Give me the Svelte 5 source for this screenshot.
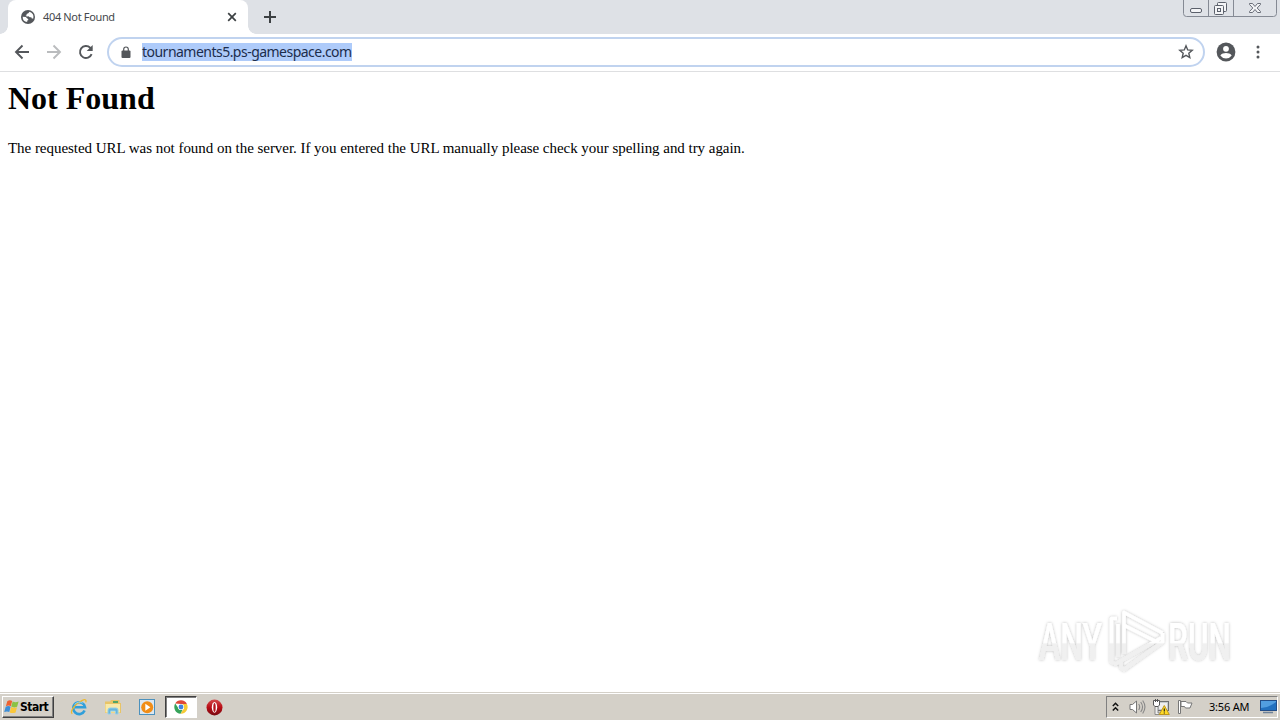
<script>
  const tabTitle = '404 Not Found';
  const address = 'tournaments5.ps-gamespace.com';
</script>

<div class="screen">
  <header class="tabs">
    <div class="tab">
      <svg class="globe" width="14" height="14" viewBox="0 0 14 14">
        <circle cx="7" cy="7" r="7" fill="#54575b" />
        <path d="M8.500 1.800 7.300 3.300 5.600 4v1.300l-1.200.6 1.800.5 1.300-.2 1.300 1.100h1.500l.5 1.200h1.500A5.300 5.300 0 0 0 8.500 1.800zM1.700 6.700l3.100.4 1.500 1.500.9.3v1.300l-1 .4v1.500A5.300 5.300 0 0 1 1.700 6.700z" fill="#fff" />
      </svg>
      <span class="tab-title">{tabTitle}</span>
      <svg class="close" width="10" height="10" viewBox="0 0 10 10"><path d="m1.200 1.200 7.600 7.600m0-7.600L1.200 8.800" stroke="#3c4043" stroke-width="1.700" /></svg>
    </div>
    <svg class="plus" width="12" height="12" viewBox="0 0 12 12"><path d="M6 0v12M0 6h12" stroke="#3c4043" stroke-width="2" /></svg>
    <svg class="window-buttons" width="94" height="18" viewBox="0 0 94 18">
      <path d="M.5 0v13.500q0 3 3 3h87q3 0 3-3V0M25.500 0v16.500M50.500 0v16.500" fill="#dfe2e7" stroke="#858a94" />
      <g fill="#f3f4f6" stroke="#5b606b">
        <rect x="7.500" y="8.500" width="11" height="4" rx="1.500" />
        <rect x="34.500" y="2.500" width="9" height="9" rx="1" />
        <rect x="31.500" y="5.500" width="9" height="9" rx="1" />
        <rect x="34.500" y="8.500" width="3" height="3" />
        <path d="M66.500 3.500h3l2.500 3 2.500-3h3v1L74.200 8l3.300 3.500v1h-3l-2.500-3-2.500 3h-3v-1L69.800 8l-3.300-3.500z" stroke-width=".9" />
      </g>
    </svg>
  </header>

  <nav class="toolbar">
    <svg class="back" width="16" height="16" viewBox="0 0 16 16"><path d="M15 8H2m6.500-6.500L2 8l6.500 6.500" fill="none" stroke="#54575b" stroke-width="1.900" /></svg>
    <svg class="forward" width="16" height="16" viewBox="0 0 16 16"><path d="M1 8h13M7.500 1.500 14 8l-6.500 6.500" fill="none" stroke="#babcbe" stroke-width="1.900" /></svg>
    <svg class="reload" width="16" height="16" viewBox="0 0 16 16"><path d="M13.600 10.100A6 6 0 1 1 12.200 3.700L13.700 5.200" fill="none" stroke="#54575b" stroke-width="1.900" /><path d="M14.700 1v6h-6z" fill="#54575b" /></svg>
    <div class="omnibox">
      <svg class="lock" width="10" height="13" viewBox="0 0 10 13"><rect y="4.500" x=".5" width="9" height="7.500" rx="1" fill="#54575b" /><path d="M2.700 5V3.300a2.300 2.300 0 0 1 4.600 0V5" fill="none" stroke="#54575b" stroke-width="1.200" /></svg>
      <span class="address">{address}</span>
      <svg class="star" width="16" height="16" viewBox="0 0 16 16"><path d="m8 1.800 1.700 4.100 4.500.4-3.400 2.900 1 4.400L8 11.300l-3.800 2.300 1-4.400-3.400-2.900 4.500-.4z" fill="none" stroke="#54575b" stroke-width="1.400" /></svg>
    </div>
    <svg class="profile" width="20" height="20" viewBox="0 0 20 20"><circle cx="10" cy="10" r="9.400" fill="#54575b" /><circle cx="10" cy="6.800" r="2.900" fill="#fff" /><path d="M4.300 13.500c1.200-1.700 3.500-2.400 5.700-2.400s4.500.7 5.700 2.400A7 7 0 0 1 10 16.500a7 7 0 0 1-5.700-3z" fill="#fff" /></svg>
    <svg class="menu" width="4" height="14" viewBox="0 0 4 14" fill="#54575b"><circle cx="2" cy="2" r="1.500" /><circle cx="2" cy="7" r="1.500" /><circle cx="2" cy="12" r="1.500" /></svg>
  </nav>

  <main>
    <h1>Not Found</h1>
    <p>The requested URL was not found on the server. If you entered the URL manually please check your spelling and try again.</p>
    <svg class="watermark" width="210" height="80" viewBox="0 0 210 80">
      <defs>
        <linearGradient id="shine" gradientUnits="userSpaceOnUse" x1="0" y1="0" x2="0" y2="80"><stop offset=".53" stop-color="#fff" /><stop offset=".55" stop-color="#f0f0f0" /></linearGradient>
        <filter id="shade" filterUnits="userSpaceOnUse" x="0" y="0" width="210" height="80"><feDropShadow dx="0" dy="0" stdDeviation="1.600" flood-color="#000" flood-opacity=".28" /></filter>
      </defs>
      <g filter="url(#shade)" fill="url(#shine)" class="mark">
        <text x="9" y="60" textLength="63" lengthAdjust="spacingAndGlyphs">ANY</text>
        <text x="138" y="60" textLength="63" lengthAdjust="spacingAndGlyphs">RUN</text>
        <path d="M94 54V12.500L132.500 33M94.500 25.500l35.500 18M87 18.500H81.500V62l4 2L131 38M88 24v33M91 62v5l3 2.500L132.500 42v-9" fill="none" stroke="url(#shine)" stroke-width="3.600" stroke-linejoin="round" />
      </g>
    </svg>
  </main>

  <footer>
    <button class="start">
      <svg width="17" height="16" viewBox="0 0 17 16">
        <path d="M4.300 2.300Q6.700.500 9.200 2L7.800 7.200Q5.600 6 2.900 7.300z" fill="#ed6231" />
        <path d="M9.700 2.400q2.600 1.500 5.900 0l-1.500 5.300q-3.200 1.500-5.900-.1z" fill="#8bc244" />
        <path d="M2.700 7.800Q5.400 6.500 7.600 7.700L6.300 13Q4 11.800 1.200 13.100z" fill="#3d8ed7" />
        <path d="M8.100 8.100q2.800 1.400 5.900.1l-1.400 5.200q-3.100 1.400-5.900 0z" fill="#fac73b" />
      </svg>
      <span>Start</span>
    </button>
    <svg class="ie" width="18" height="18" viewBox="0 0 18 18">
      <path d="M14.600 12.500A5.900 5.900 0 1 1 15 9.200H5" fill="none" stroke="#309fda" stroke-width="2.600" />
      <path d="M2.300 15.800C-1 13.800 5.800 5 12.300 2.300c3.500-1.500 4.200.1 3.500 2.100" fill="none" stroke="#edb82d" stroke-width="1.300" />
      <path d="M4.500 6.500Q8 2.700 12.800 5.100" fill="none" stroke="#89d3f2" />
    </svg>
    <svg class="folder" width="18" height="16" viewBox="0 0 18 16">
      <path d="M1 2.500h5l1-1.500h8.500v3H17v10H1z" fill="#e8c467" />
      <path d="M1.500 5H16v8.500H1.500z" fill="#f8e9a9" />
      <path d="M9 2h5v2H9z" fill="#52a467" />
      <path d="M4 15v-4q0-2 2-2h6q2 0 2 2v4h-2.500v-3h-5v3z" fill="#69b5db" stroke="#96cfe6" />
    </svg>
    <svg class="player" width="17" height="17" viewBox="0 0 17 17"><rect x=".5" y=".5" width="15" height="15" fill="#dce7f0" stroke="#4c91bd" /><circle cx="8.200" cy="8.200" r="6" fill="#f18d16" /><path d="m6.300 4.800 5.100 3.400-5.100 3.500z" fill="#fff" /></svg>
    <div class="active-app">
      <svg width="16" height="16" viewBox="0 0 16 16">
        <path d="M2.200 4.600A6.700 6.700 0 0 1 13.900 5H8z" fill="#df4838" />
        <path d="M13.900 5A6.700 6.700 0 0 1 7.500 14.700L11 9.300 8 5z" fill="#f6ca35" />
        <path d="M2.200 4.600A6.700 6.700 0 0 0 7.500 14.700L10 10H6z" fill="#36a35a" />
        <circle cx="8" cy="8" r="3.100" fill="#fff" /><circle cx="8" cy="8" r="2.400" fill="#4082df" />
      </svg>
    </div>
    <svg class="opera" width="17" height="17" viewBox="0 0 17 17">
      <defs><linearGradient id="red" x1="0" y1="0" x2="0" y2="1"><stop stop-color="#d34a4a" /><stop offset=".5" stop-color="#b80d16" /><stop offset="1" stop-color="#780810" /></linearGradient></defs>
      <ellipse cx="8.500" cy="8.500" rx="8" ry="7.900" fill="url(#red)" /><ellipse cx="8.500" cy="8.300" rx="2.700" ry="5.400" fill="#fff" /><ellipse cx="8.500" cy="8.400" rx="1.200" ry="4.500" fill="#b4151c" />
    </svg>
    <section class="tray">
      <svg class="chevron" width="7" height="10" viewBox="0 0 7 10"><path d="m.8 4 2.700-2.700L6.200 4m-5.400 4.500 2.700-2.700 2.700 2.700" fill="none" stroke="#111" stroke-width="1.500" /></svg>
      <svg class="sound" width="17" height="16" viewBox="0 0 17 16"><path d="M1 5.500h2.500L7.500 2v12l-4-3.500H1z" fill="#fff" stroke="#777" /><path d="M9.700 5q2 3 0 6m2-8q3.700 5 0 10m2-11.500q4.500 6.500 0 13" fill="none" stroke="#888" stroke-width="1.100" /></svg>
      <svg class="network" width="17" height="17" viewBox="0 0 17 17"><rect x="4.500" y="2.500" width="11" height="9" fill="#c6cbcd" stroke="#6d7071" /><path d="M6 4h8v6H6z" fill="#eee" /><path d="M2 7h3v7h5v1.500H2z" fill="#eee" stroke="#777" stroke-width=".8" /><path d="M.5 1.500h6V6L5 7.500H2L.5 6z" stroke="#555" fill="#fff" /><path d="M2.500 0v3m2-3v3" stroke="#555" /><path d="m11.300 6.500 5 9H6.300z" fill="#ffda25" stroke="#bd961c" /><path d="M11.300 9.500v3m0 1v1" stroke="#222" stroke-width="1.200" /></svg>
      <svg class="flag" width="17" height="16" viewBox="0 0 17 16"><path d="M4 2.500h5l1.500 1.500H15l-2 5H8.500L7.500 7.500H4z" fill="#fff" stroke="#777" /><path d="M1.500 1.500h2v13h-2z" fill="#fff" stroke="#777" /></svg>
      <span class="clock">3:56 AM</span>
      <svg class="desktop" width="17" height="14" viewBox="0 0 17 14"><rect x=".5" y=".5" width="16" height="10" fill="#2371bf" stroke="#234e88" /><path d="M1 8Q8 8 16 2V1H1z" fill="#529ee0" /><path d="M3 12.500h10" stroke="#6f8298" stroke-width="1.500" /></svg>
    </section>
  </footer>
</div>

<style>
  :global(body) { margin: 0; }
  .screen { width: 1280px; height: 720px; display: flex; flex-direction: column; overflow: hidden; background: #fff; font-family: "Noto Sans", sans-serif; }
  svg { display: block; flex: none; }
  .tabs { height: 34px; flex: none; display: flex; align-items: center; background: #dee1e6; padding-left: 8px; box-sizing: border-box; }
  .tab { position: relative; width: 240px; height: 34px; box-sizing: border-box; padding: 0 11px 0 13px; display: flex; align-items: center; background: #fff; border-radius: 8px 8px 0 0; }
  .tab::before, .tab::after { content: ''; position: absolute; bottom: 0; width: 8px; height: 8px; }
  .tab::before { left: -8px; background: radial-gradient(circle at 0 0, transparent 7.5px, #fff 8px); }
  .tab::after { right: -8px; background: radial-gradient(circle at 100% 0, transparent 7.5px, #fff 8px); }
  .tab-title { margin-left: 8px; padding-bottom: 2px; font: 11px "Noto Sans", sans-serif; letter-spacing: -.35px; color: #45484c; white-space: nowrap; }
  .close { margin-left: auto; }
  .plus { margin-left: 16px; }
  .window-buttons { align-self: flex-start; margin: 0 3px 0 auto; }
  .toolbar { height: 38px; flex: none; box-sizing: border-box; padding: 3px 20px 4px 14px; display: flex; align-items: center; border-bottom: 1px solid #dedfe1; }
  .forward, .reload { margin-left: 16px; }
  .omnibox { width: 1098px; height: 30px; margin-left: 13px; box-sizing: border-box; border: 2px solid #c0d3ef; border-radius: 15px; display: flex; align-items: center; padding: 0 9px 0 12px; }
  .address { margin-left: 11px; background: #aecbfa; color: #1c2d4c; height: 18px; font: 14px/17px "Noto Sans", sans-serif; white-space: nowrap; letter-spacing: -.52px; }
  .star { margin-left: auto; }
  .profile { margin-left: 11px; }
  .menu { margin-left: auto; }
  main { position: relative; flex: 1; padding: 8px; box-sizing: border-box; font: 15px/18px "Liberation Serif", serif; color: #000; }
  h1 { font-size: 32px; line-height: 37px; margin: 0 0 22px; }
  p { margin: 0; white-space: nowrap; letter-spacing: -.04px; }
  .watermark { position: absolute; left: 1030px; top: 528px; overflow: visible; }
  .mark { font: 500 52px Roboto, sans-serif; }
  footer { height: 28px; flex: none; display: flex; align-items: center; box-sizing: border-box; padding: 1px 2px 0; background: #d4d0c8; border-top: 1px solid #d4d0c8; box-shadow: inset 0 1px #fff; }
  .start { width: 52px; height: 22px; box-sizing: border-box; display: flex; align-items: center; padding: 0; background: #d4d0c8; border: 1px solid; border-color: #fff #404040 #404040 #fff; box-shadow: inset -1px -1px #808080; color: #000; font: bold 12px "DejaVu Sans Condensed", sans-serif; letter-spacing: -.5px; }
  .ie { margin-left: 16px; }
  .folder { margin-left: 16px; }
  .player { margin-left: 17px; }
  .active-app { width: 32px; height: 22px; box-sizing: border-box; margin-left: 9px; display: flex; align-items: center; justify-content: center; background: #fff; border: 1px solid; border-color: #404040 #fff #fff #404040; box-shadow: inset 1px 1px #808080; }
  .opera { margin-left: 9px; }
  .tray { width: 172px; height: 22px; box-sizing: border-box; margin-left: auto; display: flex; align-items: center; padding-left: 5px; border: 1px solid; border-color: #808080 #fff #fff #808080; }
  .sound { margin-left: 10px; }
  .network { margin-left: 7px; }
  .flag { margin-left: 7px; }
  .clock { width: 41px; margin-left: 15px; padding-bottom: 2px; font: 11px "Noto Sans", sans-serif; letter-spacing: -.2px; white-space: nowrap; }
  .desktop { margin-left: 10px; }
</style>
